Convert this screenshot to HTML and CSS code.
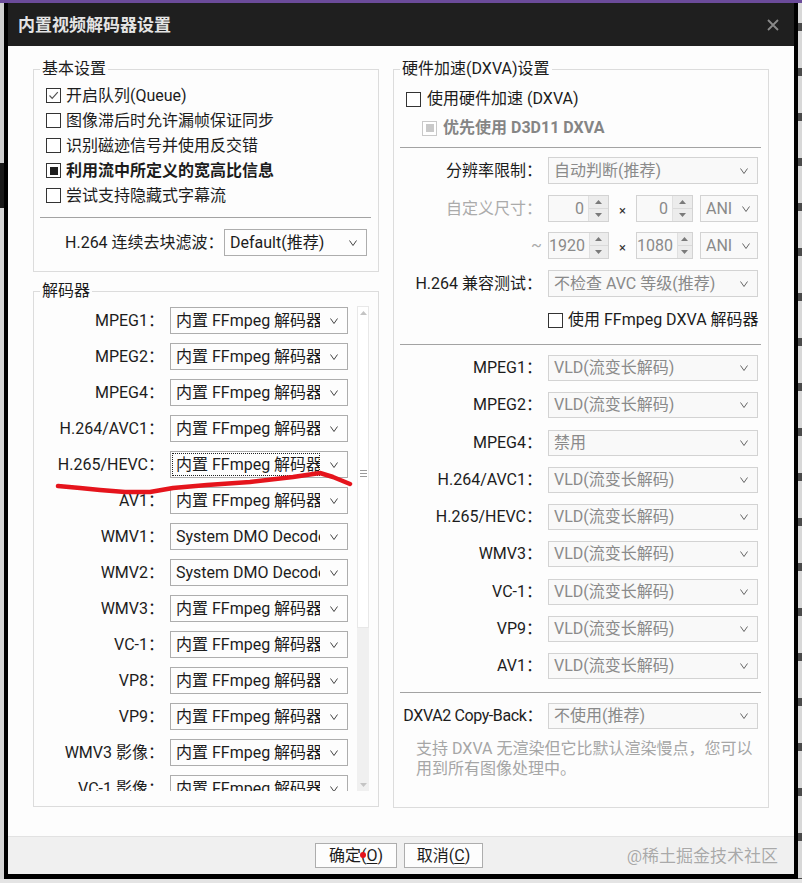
FILE: index.html
```html
<!DOCTYPE html>
<html lang="zh-CN">
<head>
<meta charset="utf-8">
<title>内置视频解码器设置</title>
<link rel="stylesheet" href="styles.css">
</head>
<body>
<div class="topline"></div>
<div class="stage">
  <div class="bg-left"></div>
  <div class="dialog">
    <div class="titlebar">
      <span class="title">内置视频解码器设置</span>
      <svg class="close" width="12" height="12" viewBox="0 0 12 12"><path d="M1 1L11 11M11 1L1 11" stroke="#8a8a8a" stroke-width="1.8" fill="none"/></svg>
    </div>
    <div class="client">
      <div class="main">
        <div class="col-left">
          <fieldset class="group basic">
            <legend>基本设置</legend>
            <div class="basic-body">
              <div class="cb-row"><span class="cb"><svg width="13" height="13" viewBox="0 0 13 13"><path d="M2.5 6.5L5.2 9.3L10.8 3.2" stroke="#555" stroke-width="1.2" fill="none"/></svg></span><span>开启队列(Queue)</span></div>
              <div class="cb-row"><span class="cb"></span><span>图像滞后时允许漏帧保证同步</span></div>
              <div class="cb-row"><span class="cb"></span><span>识别磁迹信号并使用反交错</span></div>
              <div class="cb-row"><span class="cb mixed"></span><span class="bold">利用流中所定义的宽高比信息</span></div>
              <div class="cb-row"><span class="cb"></span><span>尝试支持隐藏式字幕流</span></div>
              <div class="sep basic-sep"></div>
              <div class="h264-row">
                <span class="nowrap">H.264 连续去块滤波：</span>
                <div class="sel def-sel"><span class="txt">Default(推荐)</span><span class="chev"><svg width="8" height="6" viewBox="0 0 8 6"><path d="M0.5 0.5L4 5.5L7.5 0.5" stroke="#444" stroke-width="1" fill="none"/></svg></span></div>
              </div>
            </div>
          </fieldset>
          <fieldset class="group decoders">
            <legend>解码器</legend>
            <div class="dec-body">
              <div class="dec-list">
                <div class="dec-row"><span class="lbl">MPEG1：</span><div class="sel"><span class="txt">内置 FFmpeg 解码器(推荐)</span><span class="chev"><svg width="8" height="6" viewBox="0 0 8 6"><path d="M0.5 0.5L4 5.5L7.5 0.5" stroke="#444" stroke-width="1" fill="none"/></svg></span></div></div>
                <div class="dec-row"><span class="lbl">MPEG2：</span><div class="sel"><span class="txt">内置 FFmpeg 解码器(推荐)</span><span class="chev"><svg width="8" height="6" viewBox="0 0 8 6"><path d="M0.5 0.5L4 5.5L7.5 0.5" stroke="#444" stroke-width="1" fill="none"/></svg></span></div></div>
                <div class="dec-row"><span class="lbl">MPEG4：</span><div class="sel"><span class="txt">内置 FFmpeg 解码器(推荐)</span><span class="chev"><svg width="8" height="6" viewBox="0 0 8 6"><path d="M0.5 0.5L4 5.5L7.5 0.5" stroke="#444" stroke-width="1" fill="none"/></svg></span></div></div>
                <div class="dec-row"><span class="lbl">H.264/AVC1：</span><div class="sel"><span class="txt">内置 FFmpeg 解码器(推荐)</span><span class="chev"><svg width="8" height="6" viewBox="0 0 8 6"><path d="M0.5 0.5L4 5.5L7.5 0.5" stroke="#444" stroke-width="1" fill="none"/></svg></span></div></div>
                <div class="dec-row"><span class="lbl">H.265/HEVC：</span><div class="sel focus"><span class="txt">内置 FFmpeg 解码器(推荐)</span><span class="chev"><svg width="8" height="6" viewBox="0 0 8 6"><path d="M0.5 0.5L4 5.5L7.5 0.5" stroke="#444" stroke-width="1" fill="none"/></svg></span></div></div>
                <div class="dec-row"><span class="lbl">AV1：</span><div class="sel"><span class="txt">内置 FFmpeg 解码器(推荐)</span><span class="chev"><svg width="8" height="6" viewBox="0 0 8 6"><path d="M0.5 0.5L4 5.5L7.5 0.5" stroke="#444" stroke-width="1" fill="none"/></svg></span></div></div>
                <div class="dec-row"><span class="lbl">WMV1：</span><div class="sel"><span class="txt">System DMO Decoder</span><span class="chev"><svg width="8" height="6" viewBox="0 0 8 6"><path d="M0.5 0.5L4 5.5L7.5 0.5" stroke="#444" stroke-width="1" fill="none"/></svg></span></div></div>
                <div class="dec-row"><span class="lbl">WMV2：</span><div class="sel"><span class="txt">System DMO Decoder</span><span class="chev"><svg width="8" height="6" viewBox="0 0 8 6"><path d="M0.5 0.5L4 5.5L7.5 0.5" stroke="#444" stroke-width="1" fill="none"/></svg></span></div></div>
                <div class="dec-row"><span class="lbl">WMV3：</span><div class="sel"><span class="txt">内置 FFmpeg 解码器(推荐)</span><span class="chev"><svg width="8" height="6" viewBox="0 0 8 6"><path d="M0.5 0.5L4 5.5L7.5 0.5" stroke="#444" stroke-width="1" fill="none"/></svg></span></div></div>
                <div class="dec-row"><span class="lbl">VC-1：</span><div class="sel"><span class="txt">内置 FFmpeg 解码器(推荐)</span><span class="chev"><svg width="8" height="6" viewBox="0 0 8 6"><path d="M0.5 0.5L4 5.5L7.5 0.5" stroke="#444" stroke-width="1" fill="none"/></svg></span></div></div>
                <div class="dec-row"><span class="lbl">VP8：</span><div class="sel"><span class="txt">内置 FFmpeg 解码器(推荐)</span><span class="chev"><svg width="8" height="6" viewBox="0 0 8 6"><path d="M0.5 0.5L4 5.5L7.5 0.5" stroke="#444" stroke-width="1" fill="none"/></svg></span></div></div>
                <div class="dec-row"><span class="lbl">VP9：</span><div class="sel"><span class="txt">内置 FFmpeg 解码器(推荐)</span><span class="chev"><svg width="8" height="6" viewBox="0 0 8 6"><path d="M0.5 0.5L4 5.5L7.5 0.5" stroke="#444" stroke-width="1" fill="none"/></svg></span></div></div>
                <div class="dec-row"><span class="lbl">WMV3 影像：</span><div class="sel"><span class="txt">内置 FFmpeg 解码器(推荐)</span><span class="chev"><svg width="8" height="6" viewBox="0 0 8 6"><path d="M0.5 0.5L4 5.5L7.5 0.5" stroke="#444" stroke-width="1" fill="none"/></svg></span></div></div>
                <div class="dec-row"><span class="lbl">VC-1 影像：</span><div class="sel"><span class="txt">内置 FFmpeg 解码器(推荐)</span><span class="chev"><svg width="8" height="6" viewBox="0 0 8 6"><path d="M0.5 0.5L4 5.5L7.5 0.5" stroke="#444" stroke-width="1" fill="none"/></svg></span></div></div>
              </div>
              <div class="scrollbar">
                <div class="sb-thumb-wrap">
                  <div class="sb-btn"><svg width="7" height="4" viewBox="0 0 7 4"><path d="M0 4L3.5 0L7 4Z" fill="#c4c4c4"/></svg></div>
                  <div class="sb-thumb"><span class="grip"></span><span class="grip"></span><span class="grip"></span></div>
                </div>
                <div class="sb-track"></div>
                <div class="sb-btn"><svg width="7" height="4" viewBox="0 0 7 4"><path d="M0 0L3.5 4L7 0Z" fill="#c4c4c4"/></svg></div>
              </div>
            </div>
          </fieldset>
        </div>
        <fieldset class="group hw">
          <legend>硬件加速(DXVA)设置</legend>
          <div class="hw-body">
            <div class="cb-row hw-cb1"><span class="cb"></span><span>使用硬件加速 (DXVA)</span></div>
            <div class="cb-row hw-cb2"><span class="cb dis mixed"></span><span class="bold grey">优先使用 D3D11 DXVA</span></div>
            <div class="sep hw-sep sep1"></div>
            <div class="frow r1"><span class="lbl">分辨率限制：</span><div class="sel dis"><span class="txt">自动判断(推荐)</span><span class="chev"><svg width="8" height="6" viewBox="0 0 8 6"><path d="M0.5 0.5L4 5.5L7.5 0.5" stroke="#666" stroke-width="1" fill="none"/></svg></span></div></div>
            <div class="frow r2"><span class="lbl light">自定义尺寸：</span>
              <div class="dims">
                <div class="spin w61"><span class="val">0</span><span class="spin-btns"><span class="sp"><svg width="7" height="4" viewBox="0 0 7 4"><path d="M0 4L3.5 0L7 4Z" fill="#7a7a7a"/></svg></span><span class="sp"><svg width="7" height="4" viewBox="0 0 7 4"><path d="M0 0L3.5 4L7 0Z" fill="#7a7a7a"/></svg></span></span></div>
                <span class="times">×</span>
                <div class="spin w57"><span class="val">0</span><span class="spin-btns"><span class="sp"><svg width="7" height="4" viewBox="0 0 7 4"><path d="M0 4L3.5 0L7 4Z" fill="#7a7a7a"/></svg></span><span class="sp"><svg width="7" height="4" viewBox="0 0 7 4"><path d="M0 0L3.5 4L7 0Z" fill="#7a7a7a"/></svg></span></span></div>
                <div class="sel dis ani"><span class="txt">ANI</span><span class="chev"><svg width="8" height="6" viewBox="0 0 8 6"><path d="M0.5 0.5L4 5.5L7.5 0.5" stroke="#666" stroke-width="1" fill="none"/></svg></span></div>
              </div>
            </div>
            <div class="frow r3"><span class="lbl light">~</span>
              <div class="dims">
                <div class="spin w61"><span class="val">1920</span><span class="spin-btns"><span class="sp"><svg width="7" height="4" viewBox="0 0 7 4"><path d="M0 4L3.5 0L7 4Z" fill="#7a7a7a"/></svg></span><span class="sp"><svg width="7" height="4" viewBox="0 0 7 4"><path d="M0 0L3.5 4L7 0Z" fill="#7a7a7a"/></svg></span></span></div>
                <span class="times">×</span>
                <div class="spin w57"><span class="val">1080</span><span class="spin-btns"><span class="sp"><svg width="7" height="4" viewBox="0 0 7 4"><path d="M0 4L3.5 0L7 4Z" fill="#7a7a7a"/></svg></span><span class="sp"><svg width="7" height="4" viewBox="0 0 7 4"><path d="M0 0L3.5 4L7 0Z" fill="#7a7a7a"/></svg></span></span></div>
                <div class="sel dis ani"><span class="txt">ANI</span><span class="chev"><svg width="8" height="6" viewBox="0 0 8 6"><path d="M0.5 0.5L4 5.5L7.5 0.5" stroke="#666" stroke-width="1" fill="none"/></svg></span></div>
              </div>
            </div>
            <div class="frow r4"><span class="lbl">H.264 兼容测试：</span><div class="sel dis"><span class="txt">不检查 AVC 等级(推荐)</span><span class="chev"><svg width="8" height="6" viewBox="0 0 8 6"><path d="M0.5 0.5L4 5.5L7.5 0.5" stroke="#666" stroke-width="1" fill="none"/></svg></span></div></div>
            <div class="cb-row hw-cb3"><span class="cb"></span><span>使用 FFmpeg DXVA 解码器</span></div>
            <div class="sep hw-sep sep2"></div>
            <div class="frow d first"><span class="lbl">MPEG1：</span><div class="sel dis"><span class="txt">VLD(流变长解码)</span><span class="chev"><svg width="8" height="6" viewBox="0 0 8 6"><path d="M0.5 0.5L4 5.5L7.5 0.5" stroke="#666" stroke-width="1" fill="none"/></svg></span></div></div>
            <div class="frow d"><span class="lbl">MPEG2：</span><div class="sel dis"><span class="txt">VLD(流变长解码)</span><span class="chev"><svg width="8" height="6" viewBox="0 0 8 6"><path d="M0.5 0.5L4 5.5L7.5 0.5" stroke="#666" stroke-width="1" fill="none"/></svg></span></div></div>
            <div class="frow d"><span class="lbl">MPEG4：</span><div class="sel dis"><span class="txt">禁用</span><span class="chev"><svg width="8" height="6" viewBox="0 0 8 6"><path d="M0.5 0.5L4 5.5L7.5 0.5" stroke="#666" stroke-width="1" fill="none"/></svg></span></div></div>
            <div class="frow d"><span class="lbl">H.264/AVC1：</span><div class="sel dis"><span class="txt">VLD(流变长解码)</span><span class="chev"><svg width="8" height="6" viewBox="0 0 8 6"><path d="M0.5 0.5L4 5.5L7.5 0.5" stroke="#666" stroke-width="1" fill="none"/></svg></span></div></div>
            <div class="frow d"><span class="lbl">H.265/HEVC：</span><div class="sel dis"><span class="txt">VLD(流变长解码)</span><span class="chev"><svg width="8" height="6" viewBox="0 0 8 6"><path d="M0.5 0.5L4 5.5L7.5 0.5" stroke="#666" stroke-width="1" fill="none"/></svg></span></div></div>
            <div class="frow d"><span class="lbl">WMV3：</span><div class="sel dis"><span class="txt">VLD(流变长解码)</span><span class="chev"><svg width="8" height="6" viewBox="0 0 8 6"><path d="M0.5 0.5L4 5.5L7.5 0.5" stroke="#666" stroke-width="1" fill="none"/></svg></span></div></div>
            <div class="frow d"><span class="lbl">VC-1：</span><div class="sel dis"><span class="txt">VLD(流变长解码)</span><span class="chev"><svg width="8" height="6" viewBox="0 0 8 6"><path d="M0.5 0.5L4 5.5L7.5 0.5" stroke="#666" stroke-width="1" fill="none"/></svg></span></div></div>
            <div class="frow d"><span class="lbl">VP9：</span><div class="sel dis"><span class="txt">VLD(流变长解码)</span><span class="chev"><svg width="8" height="6" viewBox="0 0 8 6"><path d="M0.5 0.5L4 5.5L7.5 0.5" stroke="#666" stroke-width="1" fill="none"/></svg></span></div></div>
            <div class="frow d"><span class="lbl">AV1：</span><div class="sel dis"><span class="txt">VLD(流变长解码)</span><span class="chev"><svg width="8" height="6" viewBox="0 0 8 6"><path d="M0.5 0.5L4 5.5L7.5 0.5" stroke="#666" stroke-width="1" fill="none"/></svg></span></div></div>
            <div class="sep hw-sep sep3"></div>
            <div class="frow cb-back"><span class="lbl tight">DXVA2 Copy-Back：</span><div class="sel dis"><span class="txt">不使用(推荐)</span><span class="chev"><svg width="8" height="6" viewBox="0 0 8 6"><path d="M0.5 0.5L4 5.5L7.5 0.5" stroke="#666" stroke-width="1" fill="none"/></svg></span></div></div>
            <p class="note">支持 DXVA 无渲染但它比默认渲染慢点，您可以<br>用到所有图像处理中。</p>
          </div>
        </fieldset>
      </div>
      <div class="footer">
        <div class="btn ok">确定(<u>O</u>)</div>
        <div class="btn cancel">取消(<u>C</u>)</div>
        <span class="watermark">@稀土掘金技术社区</span>
      </div>
    </div>
  </div>
  <div class="bg-right"></div>
</div>
<div class="bg-bottom"></div>
<svg class="scribble" width="802" height="883" viewBox="0 0 802 883">
  <polyline points="58,486 80,488 100,490 125,492 150,492 173,488 207,485 250,482 293,477 320,473 333,477 350,484" fill="none" stroke="#e5141c" stroke-width="4.5" stroke-linecap="round" stroke-linejoin="round"/>
  <circle cx="363" cy="855" r="3" fill="#e5141c"/>
</svg>
</body>
</html>
```
FILE: styles.css
```css
* { box-sizing: border-box; }
html, body { margin: 0; padding: 0; }
body {
  width: 802px;
  height: 883px;
  overflow: hidden;
  position: relative;
  background: #e2e2e2;
  font-family: Roboto, "Noto Sans CJK SC", sans-serif;
  font-size: 16px;
  line-height: 20px;
  color: #1c1c1c;
}
.nowrap { white-space: nowrap; }
.topline { height: 3px; background: #6b4b9a; }
.stage { display: flex; height: 876px; }
.bg-left {
  width: 4px;
  background: linear-gradient(to bottom, #cfcfcf 0, #cfcfcf 160px, #1a1a1a 160px, #1a1a1a 205px, #d6d6d6 205px);
}
.bg-right {
  width: 4px;
  background: repeating-linear-gradient(to bottom, #d8d8d8 0, #d8d8d8 20px, #4a4a4a 20px, #4a4a4a 28px, #d8d8d8 28px, #d8d8d8 45px);
}
.bg-bottom { height: 4px; background: #e4e4e4; }
.dialog {
  width: 794px;
  display: flex;
  flex-direction: column;
  border-left: 4px solid #000;
  border-right: 4px solid #000;
  border-bottom: 5px solid #000;
  background: #000;
}
.titlebar {
  height: 43px;
  flex: none;
  background: #1f1f1f;
  display: flex;
  align-items: center;
  justify-content: space-between;
  padding: 0 15px 0 10px;
}
.title { color: #e4e4e4; font-size: 17px; font-weight: 600; }
.client { flex: 1; display: flex; flex-direction: column; background: #fdfdfd; }
.main { flex: 1; display: flex; align-items: flex-start; gap: 14px; padding: 13px 0 0 25px; }
.col-left { width: 346px; display: flex; flex-direction: column; gap: 9px; }

fieldset.group { margin: 0; padding: 0; border: 1px solid #dcdcdc; min-width: 0; }
fieldset.group legend { margin-left: 6px; padding: 0 2px; font-size: 16px; line-height: 20px; color: #1c1c1c; }

.cb-row { display: flex; align-items: center; gap: 5px; height: 25px; white-space: nowrap; }
.cb {
  width: 15px; height: 15px; flex: none;
  border: 1px solid #333;
  background: #fff;
  display: flex; align-items: center; justify-content: center;
}
.cb.mixed::after { content: ""; width: 8px; height: 8px; background: #1e1e1e; }
.cb.dis { border-color: #c9c9c9; }
.cb.dis.mixed::after { background: #c9c9c9; }
.bold { font-weight: 700; }
.grey { color: #858585; }

.sep { height: 1px; background: #a3a3a3; }

.basic-body { padding: 4px 7px 15px 12px; }
.basic-sep { margin: 9px 0 0 -6px; }
.h264-row { display: flex; align-items: center; margin-top: 11px; padding-left: 19px; }
.def-sel { width: 143px; height: 28px; margin-left: auto; margin-right: 4px; }

.sel {
  display: flex; align-items: center;
  height: 27px;
  border: 1px solid #adadad;
  background: #fdfdfd;
  overflow: hidden;
}
.sel .txt { flex: 1; min-width: 0; overflow: hidden; white-space: nowrap; padding-left: 5px; }
.sel .chev { width: 27px; flex: none; display: flex; justify-content: center; align-items: center; }
.sel.focus .txt { margin: 1px 0 1px 1px; border: 1px dotted #222; padding-left: 3px; height: 23px; line-height: 21px; }
.sel.dis { border-color: #d3d3d3; background: #f9f9f9; color: #8a8a8a; }
.sel.dis .chev { width: 26px; }

.dec-body { display: flex; padding: 5px 9px 15px 0; }
.dec-list { width: 323px; height: 485px; overflow: hidden; }
.dec-row { display: grid; grid-template-columns: 130px 178px; column-gap: 6px; height: 36px; padding-top: 1px; }
.dec-row .lbl { text-align: right; line-height: 27px; white-space: nowrap; }
.scrollbar { width: 12px; height: 485px; display: flex; flex-direction: column; background: #f0f0f0; }
.sb-thumb-wrap { display: flex; flex-direction: column; background: #fff; border: 1px solid #e8e8e8; }
.sb-btn { height: 12px; flex: none; display: flex; align-items: center; justify-content: center; }
.sb-thumb { height: 308px; display: flex; flex-direction: column; align-items: center; justify-content: center; gap: 2px; }
.grip { width: 7px; height: 1px; background: #9a9a9a; }
.sb-track { flex: 1; }

.hw { width: 376px; }
.hw-body { padding: 8px 10px 28px 12px; }
.hw-cb1 { height: 24px; gap: 6px; }
.hw-cb2 { height: 24px; gap: 6px; margin-top: 5px; padding-left: 16px; }
.hw-sep { margin-left: -6px; margin-right: -3px; }
.sep1 { margin-top: 7px; }
.frow { display: grid; grid-template-columns: minmax(0, 1fr) 210px; column-gap: 6px; align-items: center; height: 27px; }
.frow .lbl { text-align: right; white-space: nowrap; justify-self: end; }
.frow .lbl.light { color: #ababab; }
.frow .lbl.tight { letter-spacing: -0.4px; }
.r1 { margin-top: 9px; }
.r2 { margin-top: 11px; }
.r3 { margin-top: 10px; }
.r4 { margin-top: 11px; }
.dims { display: flex; align-items: center; height: 27px; }
.spin {
  height: 27px; display: flex;
  border: 1px solid #d3d3d3; background: #f9f9f9; color: #8a8a8a;
}
.spin.w61 { width: 61px; }
.spin.w57 { width: 57px; }
.spin .val { flex: 1; text-align: right; padding-right: 4px; line-height: 25px; }
.spin-btns { width: 20px; display: flex; flex-direction: column; background: #ececec; border-left: 1px solid #e0e0e0; }
.spin-btns .sp { flex: 1; display: flex; align-items: center; justify-content: center; }
.spin-btns .sp + .sp { border-top: 1px solid #dadada; }
.times { width: 27px; text-align: center; font-size: 13px; color: #333; padding-top: 4px; }
.ani { width: 58px; margin-left: 7px; }
.sel.dis.ani .chev { width: 22px; }
.hw-cb3 { height: 24px; margin-top: 11px; padding-left: 142px; gap: 5px; }
.sep2 { margin-top: 12px; }
.frow.d { height: 26px; margin-top: 11.25px; }
.frow.d .sel { height: 26px; }
.frow.d.first { margin-top: 10px; }
.sep3 { margin-top: 13px; }
.cb-back { height: 26px; margin-top: 10px; }
.cb-back .sel { height: 26px; }
.note { margin: 10px 0 0 0; padding-left: 10px; color: #a6a6a6; line-height: 20px; white-space: nowrap; }

.footer {
  height: 38px; flex: none;
  border-top: 1px solid #e2e2e2;
  background: #f0f0f0;
  display: flex; align-items: center;
  padding-left: 307px;
}
.btn {
  height: 25px;
  border: 1px solid #adadad;
  background: #fdfdfd;
  display: flex; align-items: center; justify-content: center;
  font-size: 16px;
}
.btn u { text-underline-offset: 2px; }
.ok { width: 82px; }
.cancel { width: 79px; margin-left: 7px; }
.watermark { margin-left: auto; margin-right: 16px; font-size: 17px; color: #a9a9a9; text-shadow: 0 0 1px #fff; }

.scribble { position: absolute; left: 0; top: 0; pointer-events: none; }
```
